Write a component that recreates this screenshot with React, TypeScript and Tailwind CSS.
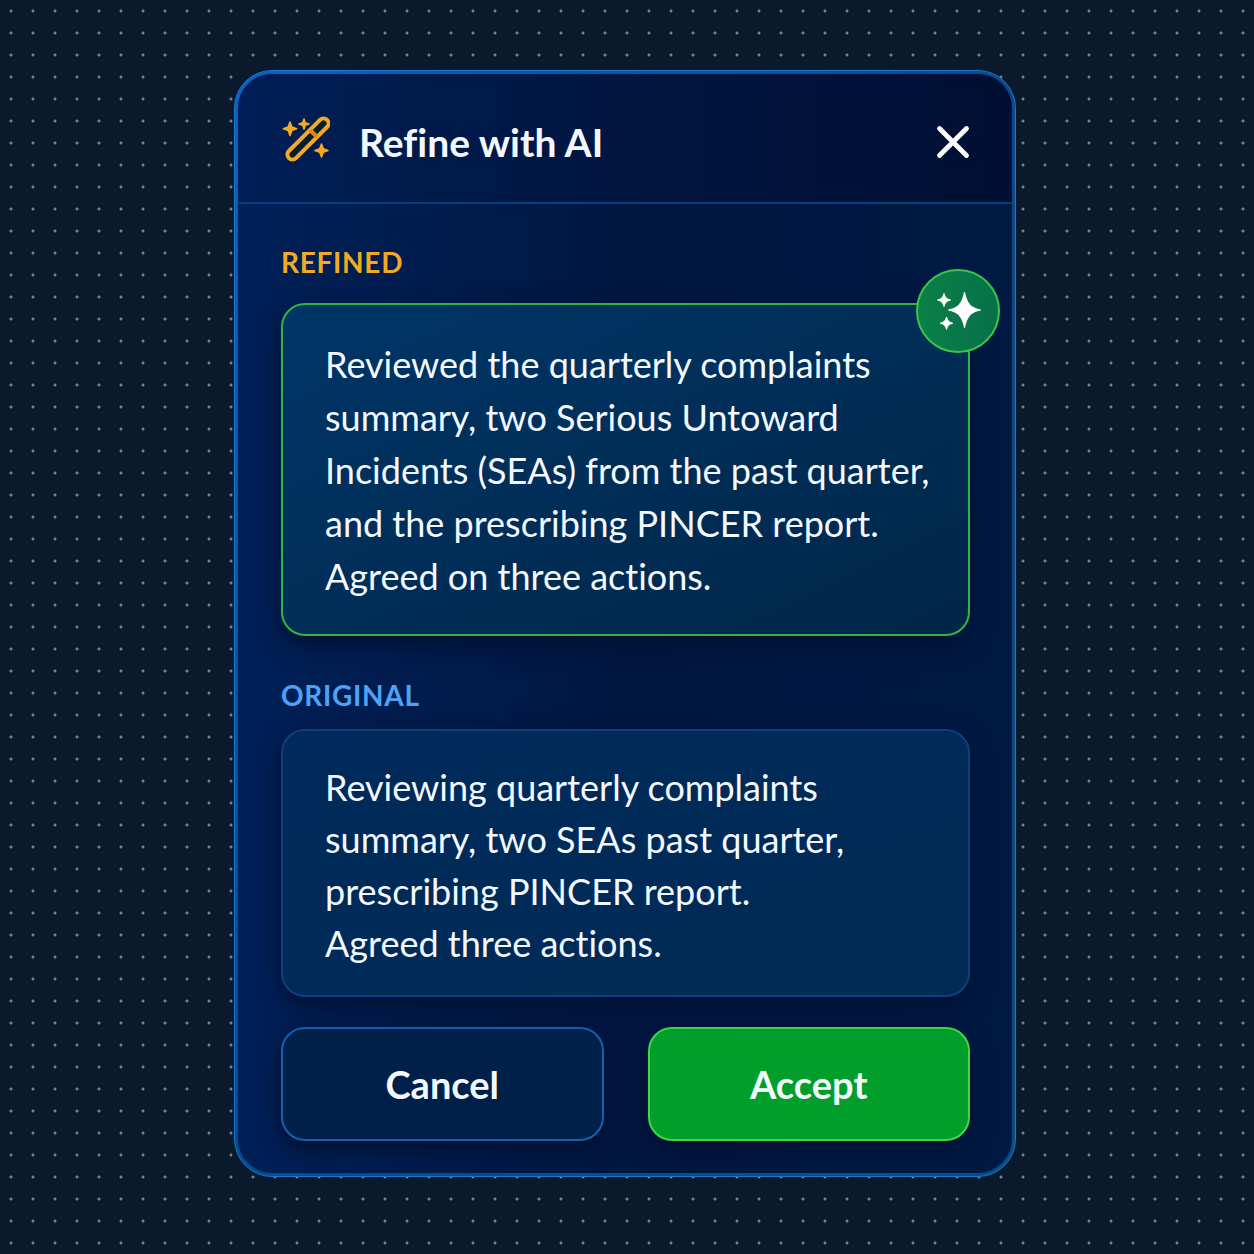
import { useState } from "react";
import type { ReactNode } from "react";

interface NotePanelProps {
    id: string;
    label: string;
    labelClass: string;
    boxClass: string;
    lines: string[];
    badge?: ReactNode;
}

const REFINED = [
    "Reviewed the quarterly complaints",
    "summary, two Serious Untoward",
    "Incidents (SEAs) from the past quarter,",
    "and the prescribing PINCER report.",
    "Agreed on three actions."
];

const ORIGINAL = [
    "Reviewing quarterly complaints",
    "summary, two SEAs past quarter,",
    "prescribing PINCER report.",
    "Agreed three actions."
];

function WandIcon() {
    return (
        <svg viewBox="0 0 48 48" className="size-12 shrink-0 text-[#f2aa25]" fill="none" aria-hidden="true">
            <rect
                x="-1"
                y="18"
                width="54"
                height="10"
                rx="5"
                transform="rotate(-45 26 23)"
                fill="#0b1c2c"
                stroke="currentColor"
                strokeWidth="4"
            />
            <path d="M28 14l7 7" stroke="#d98a1c" strokeWidth="4" />
            <g fill="currentColor" stroke="currentColor" strokeWidth="1.6" strokeLinejoin="round">
                <path d="M8 6l1.8 4.9L14.7 12.7l-4.9 1.8L8 19.4l-1.8-4.9L1.3 12.7l4.9-1.8z" />
                <path d="M22 3l1.2 3.8L27 8l-3.8 1.2L22 13l-1.2-3.8L17 8l3.8-1.2z" />
                <path d="M39.5 28l1.8 4.7L46 34.5l-4.7 1.8L39.5 41l-1.8-4.7L33 34.5l4.7-1.8z" />
            </g>
        </svg>
    );
}

function SparkleIcon() {
    return (
        <svg viewBox="0 0 48 48" className="size-12" fill="white" stroke="white" strokeLinejoin="round" aria-hidden="true">
            <path d="M30.500 5c2 10.600 5.800 16 16 18-10.200 2-14 7.400-16 18-2-10.600-5.800-16-16-18 10.200-2 14-7.400 16-18z" />
            <path d="M10 6.500c1 4 2.500 5.500 6.500 6.500-4 1-5.500 2.500-6.500 6.500-1-4-2.500-5.500-6.500-6.500 4-1 5.500-2.500 6.500-6.500z" />
            <path d="M12.500 30c1 3.800 2.400 5.200 6.200 6.200-3.800 1-5.200 2.400-6.200 6.200-1-3.800-2.400-5.200-6.200-6.200 3.800-1 5.200-2.400 6.200-6.200z" />
        </svg>
    );
}

function NotePanel({ id, label, labelClass, boxClass, lines, badge }: NotePanelProps) {
    return (
        <section aria-labelledby={id}>
            <h2 id={id} className={`text-[28px] leading-9 font-bold tracking-wide ${labelClass}`}>
                {label}
            </h2>
            <div className={`relative rounded-3xl border-2 px-[42px] text-4xl text-[#f3f8ff] ${boxClass}`}>
                <p>
                    {lines.map((line) => (
                        <span key={line} className="block sm:whitespace-nowrap">
                            {line}
                        </span>
                    ))}
                </p>
                {badge}
            </div>
        </section>
    );
}

export default function App() {
    const [open, setOpen] = useState(true);

    return (
        <main className="min-h-screen bg-[#0a192b] bg-[radial-gradient(circle,#70839a_0.8px,transparent_2px)] bg-[length:22px_22px] pt-[70px] pr-5 pb-[78px] pl-4 font-['Lato',sans-serif] [font-variant-ligatures:none]">
            {open && (
                <div
                    role="dialog"
                    aria-labelledby="refine-title"
                    className="mx-auto max-w-[782px] rounded-[38px] border border-[#1478d4] bg-linear-to-br from-[#0a62c0] via-[#084a8e] to-[#0a4c86] p-[3px]"
                >
                    <div className="overflow-hidden rounded-[34px] bg-linear-to-r from-[#002058] via-[#001742] to-[#001a44]">
                        <header className="flex h-[130px] items-center border-b-2 border-[#0a3c80] bg-linear-to-r from-[#001f56] via-[#001540] to-[#000f33] pt-1 pr-[39px] pl-11">
                            <WandIcon />
                            <h1 id="refine-title" className="ml-[29px] grow pt-1 text-[39px] leading-12 font-bold text-[#f3f8ff]">
                                Refine with AI
                            </h1>
                            <button type="button" aria-label="Close" className="cursor-pointer pt-1" onClick={() => setOpen(false)}>
                                <svg viewBox="0 0 40 40" className="size-10" fill="none" aria-hidden="true">
                                    <path d="M6.500 6.500l27 27M33.500 6.500l-27 27" stroke="white" strokeWidth="4.800" strokeLinecap="round" />
                                </svg>
                            </button>
                        </header>

                        <div className="pt-10 pr-[42px] pb-8 pl-[43px]">
                            <NotePanel
                                id="refined-label"
                                label="REFINED"
                                labelClass="mb-[23px] text-[#f2aa25]"
                                boxClass="border-[#30b445] bg-linear-to-br from-[#003668] to-[#002648] pt-[33px] pb-[31px] leading-[53px] shadow-[0_8px_24px_#00102f]"
                                lines={REFINED}
                                badge={
                                    <div className="absolute -top-9 -right-8 flex size-[84px] items-center justify-center rounded-full border-2 border-[#3cc34c] bg-linear-to-r from-[#0a8046] to-[#08704a]">
                                        <SparkleIcon />
                                    </div>
                                }
                            />
                            <div className="mt-[41px]">
                                <NotePanel
                                    id="original-label"
                                    label="ORIGINAL"
                                    labelClass="mb-4 text-[#4ea2f5]"
                                    boxClass="border-[#0a3f80] bg-linear-to-br from-[#002a5a] to-[#002b55] pt-[30px] pb-[26px] leading-[52px] shadow-[0_8px_24px_#00102f]"
                                    lines={ORIGINAL}
                                />
                            </div>
                            <div className="mt-[30px] grid grid-cols-2 gap-11 text-[38px] font-bold text-[#f3f8ff]">
                                <button
                                    type="button"
                                    className="h-[114px] cursor-pointer rounded-3xl border-2 border-[#1460b4] bg-[#002049] shadow-[0_8px_24px_#00102f]"
                                    onClick={() => setOpen(false)}
                                >
                                    Cancel
                                </button>
                                <button
                                    type="button"
                                    className="h-[114px] cursor-pointer rounded-3xl border-2 border-[#42d64a] bg-[#029e2b] shadow-[0_8px_24px_#00102f]"
                                    onClick={() => setOpen(false)}
                                >
                                    Accept
                                </button>
                            </div>
                        </div>
                    </div>
                </div>
            )}
        </main>
    );
}
